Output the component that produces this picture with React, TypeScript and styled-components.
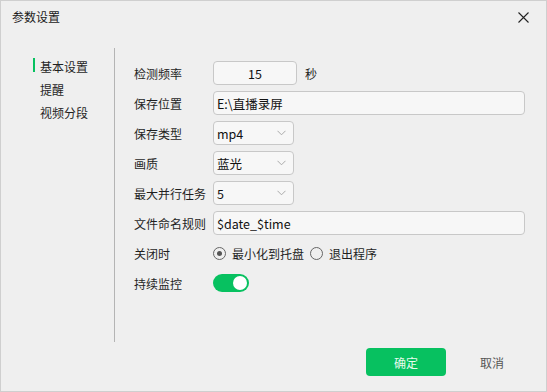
import React, { useState } from "react";
import styled, { createGlobalStyle } from "styled-components";

const Global = createGlobalStyle`
  html, body { margin: 0; padding: 0; background: #efefef; }
  * { box-sizing: border-box; }
  body { font-family: "Noto Sans CJK SC", "Noto Sans", sans-serif; font-size: 12px; color: #222; }
`;

const Window = styled.div`
  width: 547px;
  height: 392px;
  background: #efefef;
  border: 1px solid #cfcfcf;
  display: flex;
  flex-direction: column;
`;

const TitleBar = styled.div`
  height: 30px;
  display: flex;
  align-items: center;
  justify-content: space-between;
  padding: 0 17px 0 11px;
  font-size: 12px;
  color: #1a1a1a;
`;

const CloseBtn = styled.div`
  width: 12px;
  height: 12px;
  display: flex;
  align-items: center;
  justify-content: center;
  margin-top: 2px;
`;

const Body = styled.div`
  display: flex;
  padding-top: 17px;
  height: 311px;
`;

const Nav = styled.div`
  width: 113px;
  padding: 7px 0 0 32px;
  display: flex;
  flex-direction: column;
`;

const NavItem = styled.div<{ $active?: boolean }>`
  position: relative;
  height: 23px;
  line-height: 23px;
  padding-left: 7px;
  color: #1f1f1f;
  &::before {
    content: "";
    display: ${(p) => (p.$active ? "block" : "none")};
    position: absolute;
    left: 0;
    top: 3px;
    width: 2px;
    height: 14px;
    background: #07c160;
  }
`;

const Panel = styled.div`
  flex: 1;
  border-left: 1px solid #b4b4b4;
  padding: 13px 0 0 19px;
  display: flex;
  flex-direction: column;
  gap: 6px;
`;

const Row = styled.div`
  display: flex;
  align-items: center;
  height: 24px;
`;

const Label = styled.div`
  width: 79px;
  flex: none;
  white-space: nowrap;
  color: #1f1f1f;
`;

const Input = styled.div<{ $w: number; $center?: boolean }>`
  width: ${(p) => p.$w}px;
  height: 24px;
  background: #f7f7f7;
  border: 1px solid #c8c8c8;
  border-radius: 4px;
  display: flex;
  align-items: center;
  justify-content: ${(p) => (p.$center ? "center" : "flex-start")};
  padding: 0 3px;
  color: #111;
  font-size: 12.5px;
`;

const Unit = styled.span`
  margin-left: 8px;
`;

const Select = styled.div`
  width: 81px;
  height: 24px;
  background: #f7f7f7;
  border: 1px solid #c8c8c8;
  border-radius: 4px;
  display: flex;
  align-items: center;
  justify-content: space-between;
  padding: 0 7px 0 3px;
  color: #111;
  font-size: 12.5px;
`;

const RadioGroup = styled.div`
  display: flex;
  align-items: center;
`;

const RadioOption = styled.label`
  display: flex;
  align-items: center;
  gap: 6px;
  margin-right: 6px;
  color: #1f1f1f;
`;

const RadioCircle = styled.span<{ $checked?: boolean }>`
  width: 13px;
  height: 13px;
  border-radius: 50%;
  border: 1.5px solid #666;
  display: flex;
  align-items: center;
  justify-content: center;
  &::after {
    content: "";
    width: 5px;
    height: 5px;
    border-radius: 50%;
    background: #555;
    display: ${(p) => (p.$checked ? "block" : "none")};
  }
`;

const Toggle = styled.div<{ $on: boolean }>`
  width: 36px;
  height: 18px;
  border-radius: 9px;
  background: ${(p) => (p.$on ? "#07c160" : "#bbb")};
  display: flex;
  align-items: center;
  justify-content: ${(p) => (p.$on ? "flex-end" : "flex-start")};
  padding: 0 2px;
  cursor: pointer;
  &::after {
    content: "";
    width: 14px;
    height: 14px;
    border-radius: 50%;
    background: #fff;
  }
`;

const Footer = styled.div`
  display: flex;
  justify-content: flex-end;
  gap: 6px;
  padding: 6px 14px 0 0;
`;

const Button = styled.button<{ $primary?: boolean }>`
  width: 80px;
  height: 28px;
  border: none;
  border-radius: 4px;
  font-family: inherit;
  font-size: 12px;
  background: ${(p) => (p.$primary ? "#07c160" : "transparent")};
  color: ${(p) => (p.$primary ? "#e8fbef" : "#555")};
`;

const Chevron = () => (
  <svg width="9" height="6" viewBox="0 0 9 6">
    <path d="M0.5 0.8 L4.5 4.8 L8.5 0.8" fill="none" stroke="#aaa" strokeWidth="1" />
  </svg>
);

export default function App() {
  const [on, setOn] = useState(true);
  const [close, setClose] = useState(0);
  return (
    <>
      <Global />
      <Window>
        <TitleBar>
          <span>参数设置</span>
          <CloseBtn>
            <svg width="11" height="11" viewBox="0 0 11 11">
              <path d="M0.5 0.5 L10.5 10.5 M10.5 0.5 L0.5 10.5" stroke="#222" strokeWidth="1.1" />
            </svg>
          </CloseBtn>
        </TitleBar>
        <Body>
          <Nav>
            <NavItem $active>基本设置</NavItem>
            <NavItem>提醒</NavItem>
            <NavItem>视频分段</NavItem>
          </Nav>
          <Panel>
            <Row>
              <Label>检测频率</Label>
              <Input $w={84} $center>15</Input>
              <Unit>秒</Unit>
            </Row>
            <Row>
              <Label>保存位置</Label>
              <Input $w={312}>E:\直播录屏</Input>
            </Row>
            <Row>
              <Label>保存类型</Label>
              <Select>mp4<Chevron /></Select>
            </Row>
            <Row>
              <Label>画质</Label>
              <Select>蓝光<Chevron /></Select>
            </Row>
            <Row>
              <Label>最大并行任务</Label>
              <Select>5<Chevron /></Select>
            </Row>
            <Row>
              <Label>文件命名规则</Label>
              <Input $w={312}>$date_$time</Input>
            </Row>
            <Row>
              <Label>关闭时</Label>
              <RadioGroup>
                <RadioOption onClick={() => setClose(0)}>
                  <RadioCircle $checked={close === 0} />
                  最小化到托盘
                </RadioOption>
                <RadioOption onClick={() => setClose(1)}>
                  <RadioCircle $checked={close === 1} />
                  退出程序
                </RadioOption>
              </RadioGroup>
            </Row>
            <Row>
              <Label>持续监控</Label>
              <Toggle $on={on} onClick={() => setOn(!on)} />
            </Row>
          </Panel>
        </Body>
        <Footer>
          <Button $primary>确定</Button>
          <Button>取消</Button>
        </Footer>
      </Window>
    </>
  );
}
